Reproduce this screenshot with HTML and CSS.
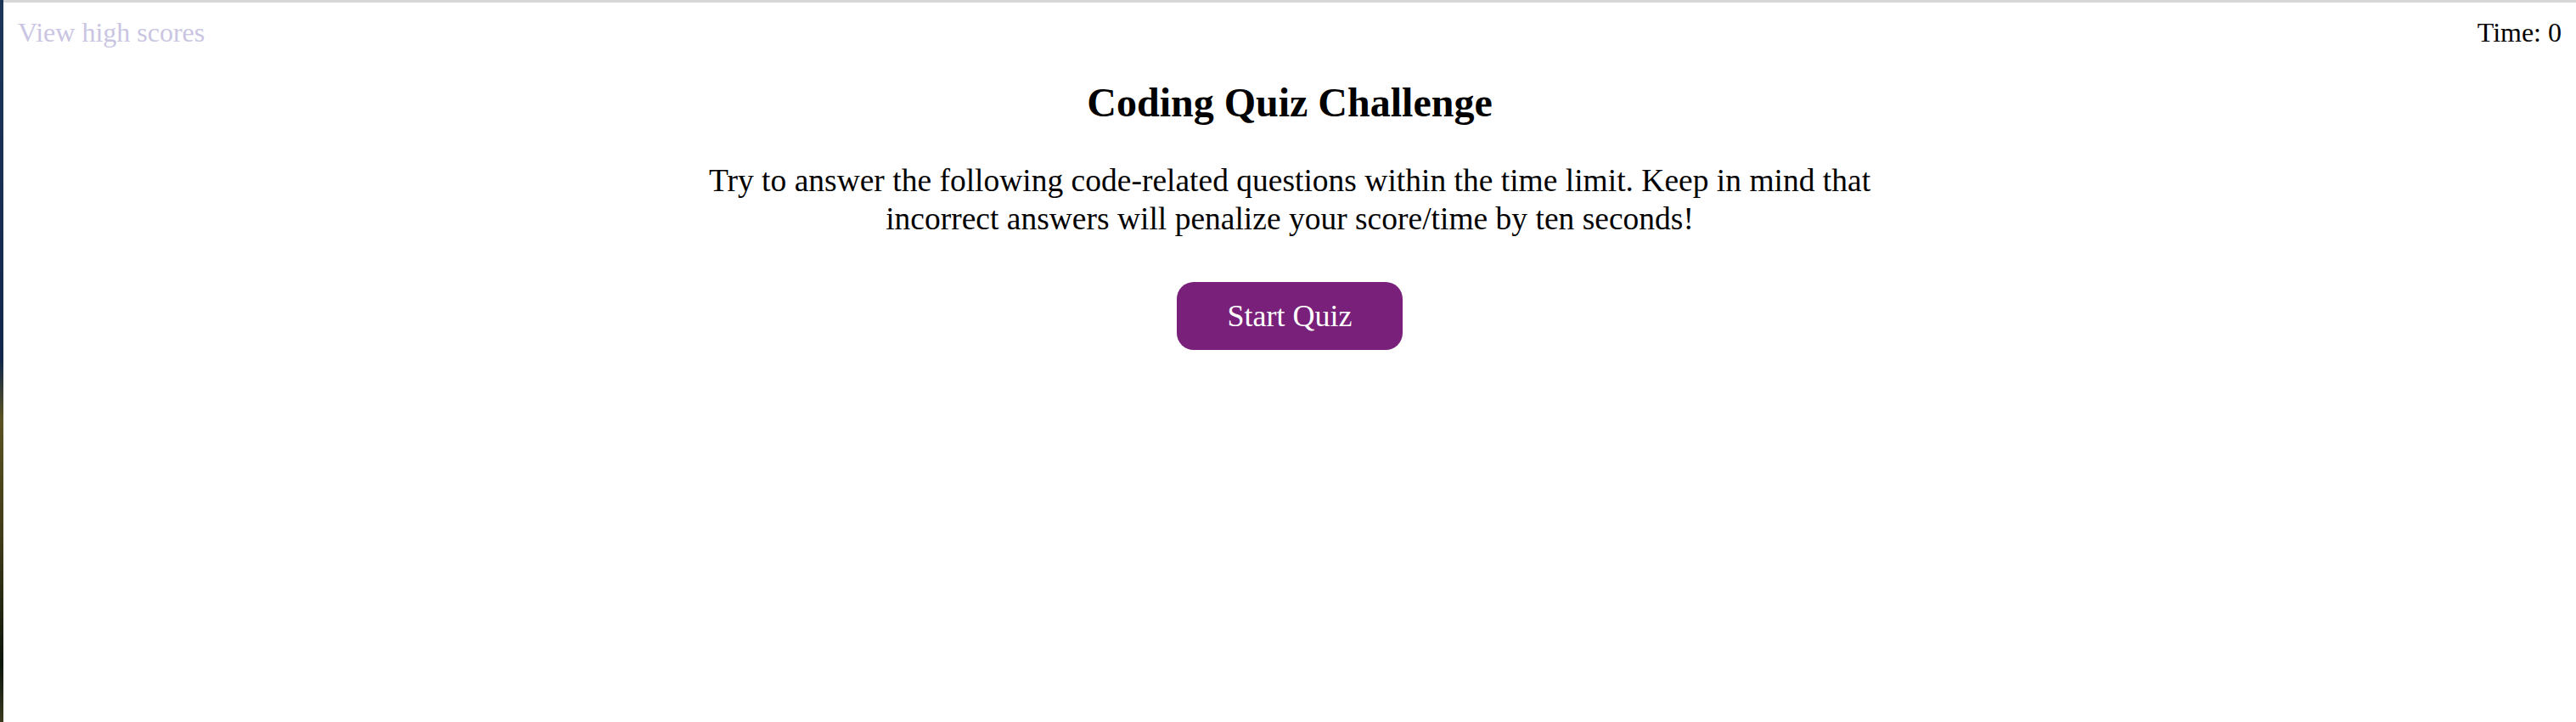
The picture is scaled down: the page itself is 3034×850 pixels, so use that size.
FILE: index.html
```html
<!DOCTYPE html>
<html lang="en">
<head>
<meta charset="utf-8">
<title>Coding Quiz Challenge</title>
<link rel="stylesheet" href="styles.css">
</head>
<body>
<div class="frame">
  <div class="wallpaper"></div>
  <div class="window">
    <header class="topbar">
      <a class="highscores" href="#">View high scores</a>
      <div class="timer">Time: 0</div>
    </header>
    <main class="intro">
      <h1 class="title">Coding Quiz Challenge</h1>
      <p class="lead">Try to answer the following code-related questions within the time limit. Keep in mind that incorrect answers will penalize your score/time by ten seconds!</p>
      <button class="start" type="button">Start Quiz</button>
    </main>
  </div>
</div>
</body>
</html>
```

FILE: styles.css
```css
html, body {
  margin: 0;
  padding: 0;
  height: 100%;
  background: #ffffff;
}
body {
  font-family: "Liberation Serif", "Times New Roman", serif;
  color: #000;
}
.frame {
  display: flex;
  height: 850px;
}
.wallpaper {
  width: 4px;
  flex: none;
  background: linear-gradient(to bottom, #1d3658 0%, #12284a 50%, #5a5222 58%, #3f3a18 75%, #0d160c 92%, #3a3a20 100%);
}
.window {
  flex: 1;
  border-top: 3px solid #d6d7d9;
  background: #fff;
}
.topbar {
  display: flex;
  justify-content: space-between;
  padding: 17px 17px 0 17px;
  font-size: 32px;
  line-height: 36px;
}
.highscores {
  color: #c9c5e2;
  text-decoration: none;
}
.timer {
  color: #000;
}
.intro {
  display: flex;
  flex-direction: column;
  align-items: center;
  text-align: center;
}
.title {
  font-size: 48px;
  font-weight: bold;
  line-height: 53px;
  margin: 38px 0 0 0;
}
.lead {
  font-size: 37.5px;
  line-height: 45px;
  max-width: 1500px;
  margin: 43px 0 0 0;
}
.start {
  margin-top: 52px;
  font-family: "Liberation Serif", "Times New Roman", serif;
  font-size: 36px;
  line-height: 40px;
  color: #fff;
  background: #79207a;
  border: none;
  border-radius: 20px;
  width: 266px;
  height: 80px;
  padding: 0;
  cursor: pointer;
}
```
